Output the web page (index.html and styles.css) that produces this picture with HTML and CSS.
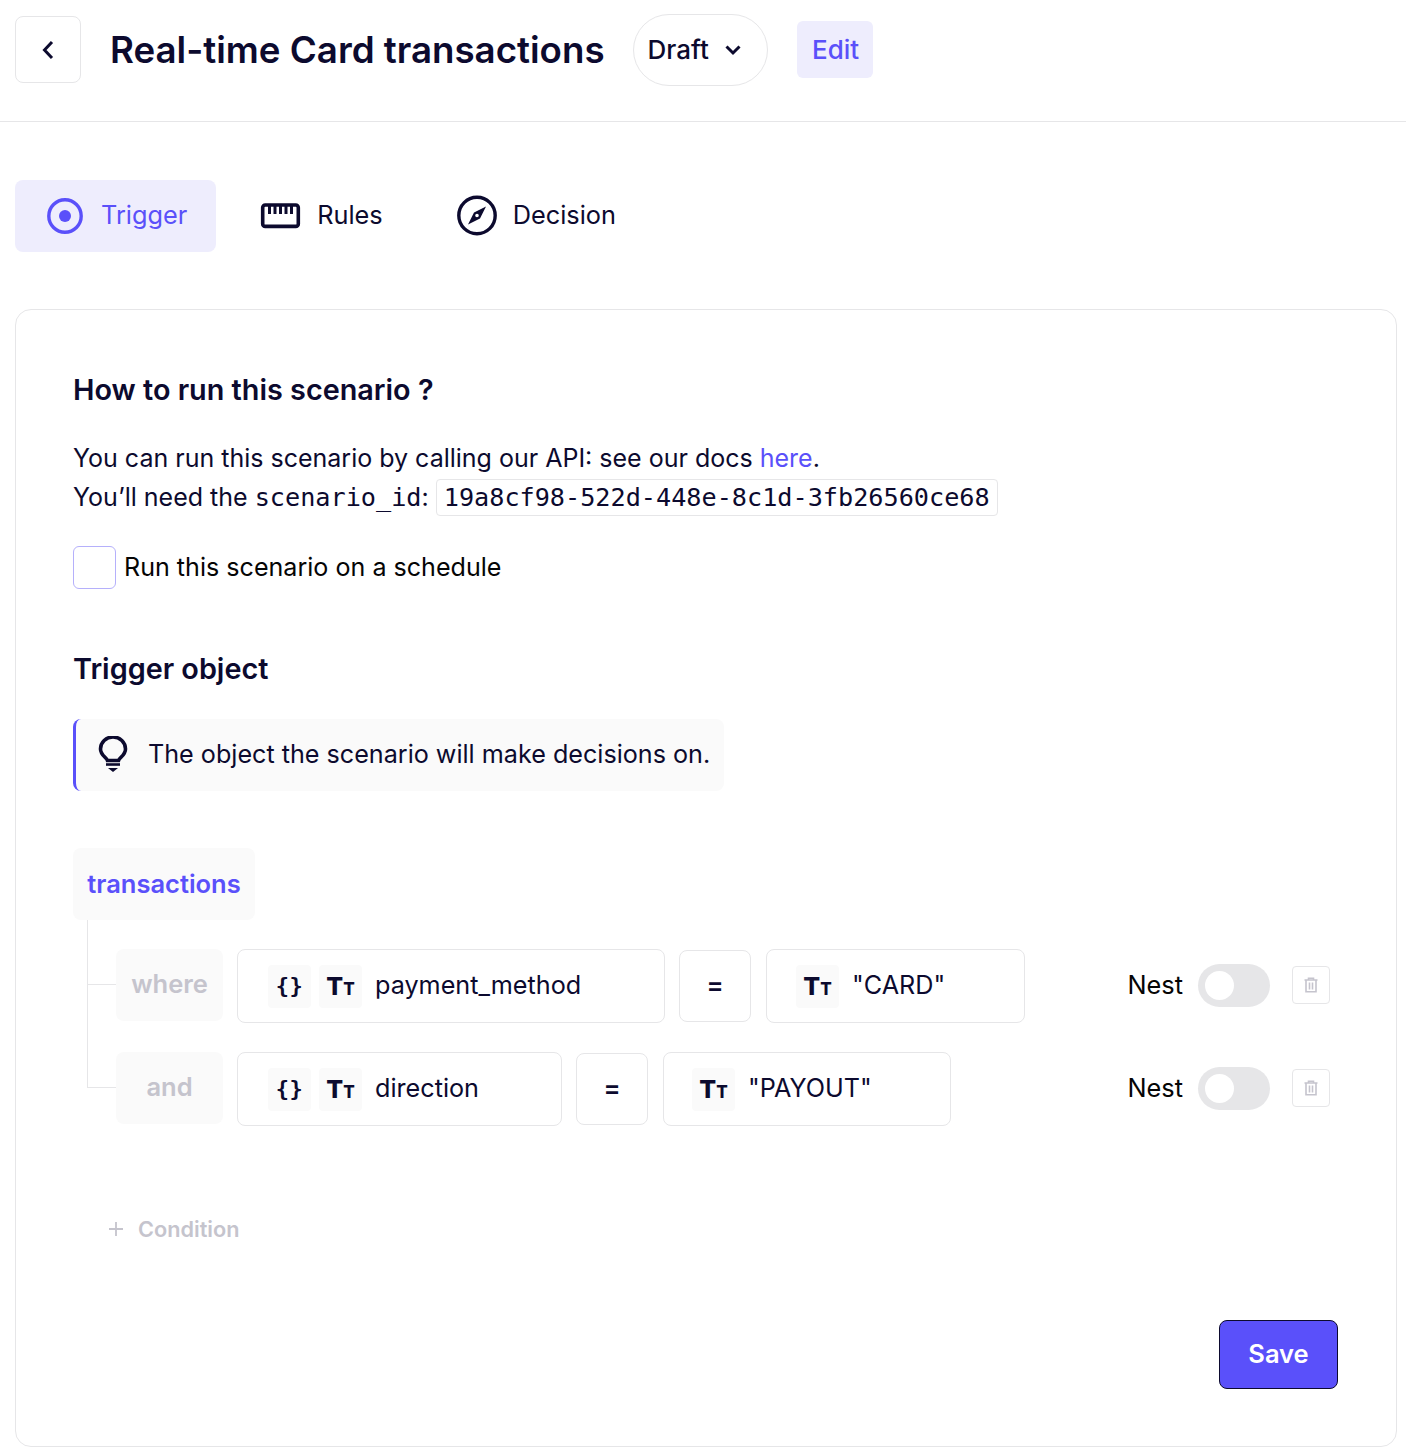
FILE: index.html
```html
<!DOCTYPE html>
<html lang="en">
<head>
    <meta charset="UTF-8">
    <title>Real-time Card transactions</title>
    <link rel="stylesheet" href="styles.css">
</head>
<body>
    <header class="topbar">
        <a class="back-btn" href="#">
            <svg width="16" height="22" viewBox="0 0 16 22"><path d="M12 3 L4.5 11 L12 19" class="stroke-dark"/></svg>
        </a>
        <h1>Real-time Card transactions</h1>
        <button class="status-pill">Draft
            <svg width="18" height="12" viewBox="0 0 18 12"><path d="M2.5 2.5 L9 9 L15.5 2.5" class="stroke-dark"/></svg>
        </button>
        <button class="edit-btn">Edit</button>
    </header>

    <main class="page">
        <nav class="tabs">
            <a class="tab active" href="#">
                <svg class="tab-icon" viewBox="0 0 44 44"><circle cx="22" cy="22" r="16.2" fill="none" stroke="#5a50fa" stroke-width="3.4"/><circle cx="22" cy="22" r="6" fill="#5a50fa"/></svg>
                <span class="tab-label">Trigger</span>
            </a>
            <a class="tab" href="#">
                <svg class="tab-icon" viewBox="0 0 44 44"><rect x="3.700" y="11" width="35.600" height="21.400" rx="2.500" fill="none" stroke="#0c0a2e" stroke-width="3.600"/><path d="M10.500 12 V20 M16 12 V20 M21.500 12 V20 M27 12 V20 M32.500 12 V20" fill="none" stroke="#0c0a2e" stroke-width="3"/></svg>
                <span class="tab-label">Rules</span>
            </a>
            <a class="tab" href="#">
                <svg class="tab-icon" viewBox="0 0 44 44"><circle cx="22" cy="21.500" r="18.200" fill="none" stroke="#0c0a2e" stroke-width="3.400"/><path d="M31 12.500 L25 24.500 L13 30.500 L19 18.500 Z M22 19.700 A1.800 1.800 0 1 0 22 23.300 A1.800 1.800 0 1 0 22 19.700 Z" fill="#0c0a2e" fill-rule="evenodd"/></svg>
                <span class="tab-label">Decision</span>
            </a>
        </nav>

        <section class="card">
            <h2>How to run this scenario ?</h2>
            <p class="copy">You can run this scenario by calling our API: see our docs <a href="#">here</a>.<br>
                You’ll need the <code>scenario_id</code>: <code class="id-box">19a8cf98-522d-448e-8c1d-3fb26560ce68</code></p>
            <label class="schedule"><span class="checkbox"></span><span class="schedule-text">Run this scenario on a schedule</span></label>

            <h2 class="second">Trigger object</h2>
            <div class="callout">
                <svg width="32" height="38" viewBox="0 0 32 38"><path d="M10.500 24.500 C9.800 21.500 3.500 19.500 3.500 13 A12.500 12 0 0 1 28.500 13 C28.500 19.500 22.200 21.500 21.500 24.500 Z" fill="none" stroke="#0c0a2e" stroke-width="3.600"/><path d="M9 28.500 H23" stroke="#0c0a2e" stroke-width="2.600"/><path d="M11 32 H21 L16 36 Z" fill="#0c0a2e"/></svg>
                <span class="callout-text">The object the scenario will make decisions on.</span>
            </div>

            <div class="object-chip">transactions</div>

            <div class="conditions">
                <div class="row">
                    <div class="logic">where</div>
                    <div class="field field-name first-field">
                        <span class="type-badge mono">{}</span>
                        <span class="type-badge">T<small>T</small></span>
                        <span class="field-text">payment_method</span>
                    </div>
                    <div class="op">=</div>
                    <div class="field field-value card-value">
                        <span class="type-badge">T<small>T</small></span>
                        <span class="field-text">"CARD"</span>
                    </div>
                    <span class="nest">Nest</span>
                    <span class="toggle"></span>
                    <button class="trash">
                        <svg width="16" height="16" viewBox="0 0 16 16"><path d="M1.500 3 H14.500 M5.500 3 V1.200 H10.500 V3 M3 3 V14.800 H13 V3 M6.500 5.500 V12.500 M9.500 5.500 V12.500" fill="none" stroke="#c5c4cd" stroke-width="1.600"/></svg>
                    </button>
                </div>
                <div class="row">
                    <div class="logic">and</div>
                    <div class="field field-name second-field">
                        <span class="type-badge mono">{}</span>
                        <span class="type-badge">T<small>T</small></span>
                        <span class="field-text">direction</span>
                    </div>
                    <div class="op">=</div>
                    <div class="field field-value payout-value">
                        <span class="type-badge">T<small>T</small></span>
                        <span class="field-text">"PAYOUT"</span>
                    </div>
                    <span class="nest">Nest</span>
                    <span class="toggle"></span>
                    <button class="trash">
                        <svg width="16" height="16" viewBox="0 0 16 16"><path d="M1.500 3 H14.500 M5.500 3 V1.200 H10.500 V3 M3 3 V14.800 H13 V3 M6.500 5.500 V12.500 M9.500 5.500 V12.500" fill="none" stroke="#c5c4cd" stroke-width="1.600"/></svg>
                    </button>
                </div>
            </div>

            <button class="add-condition">
                <svg width="16" height="16" viewBox="0 0 16 16"><path d="M8 1 V15 M1 8 H15" stroke="#c5c4cd" stroke-width="1.800"/></svg>
                Condition
            </button>

            <div class="actions">
                <button class="save">Save</button>
            </div>
        </section>
    </main>
</body>
</html>
```

FILE: styles.css
```css
* {
    box-sizing: border-box;
}
body {
    margin: 0;
    font-family: Inter, "Noto Sans", sans-serif;
    color: #0c0a2e;
    background-color: white;
}
button {
    font-family: inherit;
    cursor: pointer;
}
.stroke-dark {
    fill: none;
    stroke: #0c0a2e;
    stroke-width: 3;
}

/* top bar */
.topbar {
    display: flex;
    align-items: center;
    height: 122px;
    padding: 0 0 22px 15px;
    border-bottom: 1px solid #e6e6e8;
}
.back-btn {
    display: flex;
    align-items: center;
    justify-content: center;
    width: 66px;
    height: 67px;
    border: 1px solid #e6e6e8;
    border-radius: 8px;
}
h1 {
    margin: 0 28px 0 29px;
    font-size: 36.700px;
    font-weight: 600;
    white-space: nowrap;
}
.status-pill {
    display: flex;
    align-items: center;
    gap: 15px;
    width: 135px;
    height: 72px;
    padding: 0 0 0 14px;
    color: #0c0a2e;
    font-size: 26px;
    font-weight: 500;
    background: white;
    border: 1px solid #e6e6e8;
    border-radius: 36px;
}
.edit-btn {
    width: 76px;
    height: 57px;
    margin-left: 29px;
    padding: 0 0 0 2px;
    color: #5a50fa;
    font-size: 26px;
    font-weight: 500;
    background-color: #eeedfd;
    border: none;
    border-radius: 6px;
}

/* tabs */
.page {
    padding: 58px 9px 0 15px;
}
.tabs {
    display: flex;
    gap: 15px;
}
.tab {
    display: flex;
    align-items: center;
    gap: 14px;
    height: 72px;
    padding: 0 29px 0 28px;
    color: #0c0a2e;
    font-size: 25.300px;
    text-decoration: none;
    border-radius: 8px;
}
.tab.active {
    color: #5a50fa;
    background-color: #eeedfd;
}
.tab-icon {
    width: 44px;
    height: 44px;
}
.tab-label {
    margin-bottom: 3px;
}

/* main card */
.card {
    margin-top: 57px;
    height: 1138px;
    padding: 62px 58px 0 57px;
    border: 1px solid #e6e6e8;
    border-radius: 16px;
}
h2 {
    margin: 0;
    font-size: 28.800px;
    font-weight: 600;
    line-height: 36px;
}
.second {
    margin-top: 62px;
}
.copy {
    margin: 31px 0 0;
    font-size: 25px;
    line-height: 39px;
}
.copy a {
    color: #5a50fa;
    text-decoration: none;
}
code {
    font-family: "DejaVu Sans Mono", monospace;
    font-size: 25.200px;
}
.id-box {
    padding: 3px 7px;
    border: 1px solid #e6e6e8;
    border-radius: 4px;
}
.schedule {
    display: flex;
    align-items: center;
    gap: 8px;
    margin-top: 29px;
    font-size: 25.100px;
    color: #050505;
}
.schedule-text {
    margin-bottom: 2px;
}
.checkbox {
    width: 43px;
    height: 43px;
    border: 1px solid #b5b0fb;
    border-radius: 6px;
}
.callout {
    display: inline-flex;
    align-items: center;
    gap: 19px;
    height: 72px;
    margin-top: 32px;
    padding: 0 14px 0 21px;
    font-size: 25.150px;
    background-color: #fafafa;
    border-left: 3px solid #5a50fa;
    border-radius: 8px;
    vertical-align: top;
}
.callout-text {
    margin-bottom: 2px;
}
.object-chip {
    width: 182px;
    height: 72px;
    margin-top: 57px;
    color: #5a50fa;
    font-size: 25.500px;
    font-weight: 600;
    line-height: 72px;
    text-align: center;
    background-color: #fafafa;
    border-radius: 8px;
}

/* condition rows */
.conditions {
    position: relative;
    display: flex;
    flex-direction: column;
    gap: 29px;
    margin-left: 14px;
    padding: 29px 8px 0 29px;
}
.conditions::before {
    content: "";
    position: absolute;
    left: 0;
    top: 0;
    bottom: 39px;
    border-left: 1px solid #e6e6e8;
}
.row {
    position: relative;
    display: flex;
    align-items: center;
    height: 74px;
}
.row::before {
    content: "";
    position: absolute;
    left: -29px;
    top: 35px;
    width: 29px;
    border-top: 1px solid #e6e6e8;
}
.logic {
    display: flex;
    align-items: center;
    justify-content: center;
    align-self: flex-start;
    width: 107px;
    height: 72px;
    margin-right: 14px;
    padding-bottom: 4px;
    color: #c5c4cd;
    font-size: 25.500px;
    font-weight: 600;
    background-color: #fafafa;
    border-radius: 8px;
}
.field {
    display: flex;
    align-items: center;
    height: 74px;
    padding-left: 30px;
    font-size: 25.200px;
    border: 1px solid #e6e6e8;
    border-radius: 8px;
}
.field-text {
    margin-bottom: 3px;
    margin-left: 5px;
}
.first-field {
    width: 428px;
}
.second-field {
    width: 325px;
}
.card-value {
    width: 259px;
    padding-left: 29px;
}
.payout-value {
    width: 288px;
    padding-left: 28px;
}
.type-badge {
    display: flex;
    align-items: baseline;
    justify-content: center;
    width: 43px;
    height: 43px;
    margin-right: 8px;
    font-size: 25px;
    font-weight: 800;
    line-height: 43px;
    background-color: #fafafa;
    border-radius: 4px;
}
.type-badge small {
    font-size: 17px;
}
.mono {
    font-family: "DejaVu Sans Mono", monospace;
    font-size: 22px;
    font-weight: 700;
    line-height: 41px;
    letter-spacing: 0.500px;
}
.op {
    display: flex;
    align-items: center;
    justify-content: center;
    width: 72px;
    height: 72px;
    margin: 0 15px 0 14px;
    padding-bottom: 3px;
    font-size: 25.500px;
    font-weight: 600;
    border: 1px solid #e6e6e8;
    border-radius: 8px;
}
.nest {
    margin-left: auto;
    margin-right: 15px;
    margin-bottom: 4px;
    color: #050505;
    font-size: 25.300px;
}
.toggle {
    position: relative;
    width: 72px;
    height: 43px;
    margin-bottom: 2px;
    background-color: #e6e6e8;
    border-radius: 22px;
}
.toggle::after {
    content: "";
    position: absolute;
    left: 7px;
    top: 7px;
    width: 29px;
    height: 29px;
    background-color: white;
    border-radius: 50%;
}
.trash {
    display: flex;
    align-items: center;
    justify-content: center;
    width: 38px;
    height: 38px;
    margin-left: 22px;
    margin-bottom: 2px;
    padding: 0;
    background: white;
    border: 1px solid #e6e6e8;
    border-radius: 4px;
}

/* footer of card */
.add-condition {
    display: flex;
    align-items: center;
    gap: 14px;
    margin: 90px 0 0 35px;
    padding: 0;
    color: #c5c4cd;
    font-size: 21.700px;
    font-weight: 600;
    background: none;
    border: none;
}
.actions {
    display: flex;
    justify-content: flex-end;
    margin-top: 78px;
}
.save {
    width: 119px;
    height: 69px;
    padding: 0 0 2px;
    color: white;
    font-size: 25.500px;
    font-weight: 600;
    background-color: #5a50fa;
    border: 1px solid #0c0a2e;
    border-radius: 8px;
}
```
